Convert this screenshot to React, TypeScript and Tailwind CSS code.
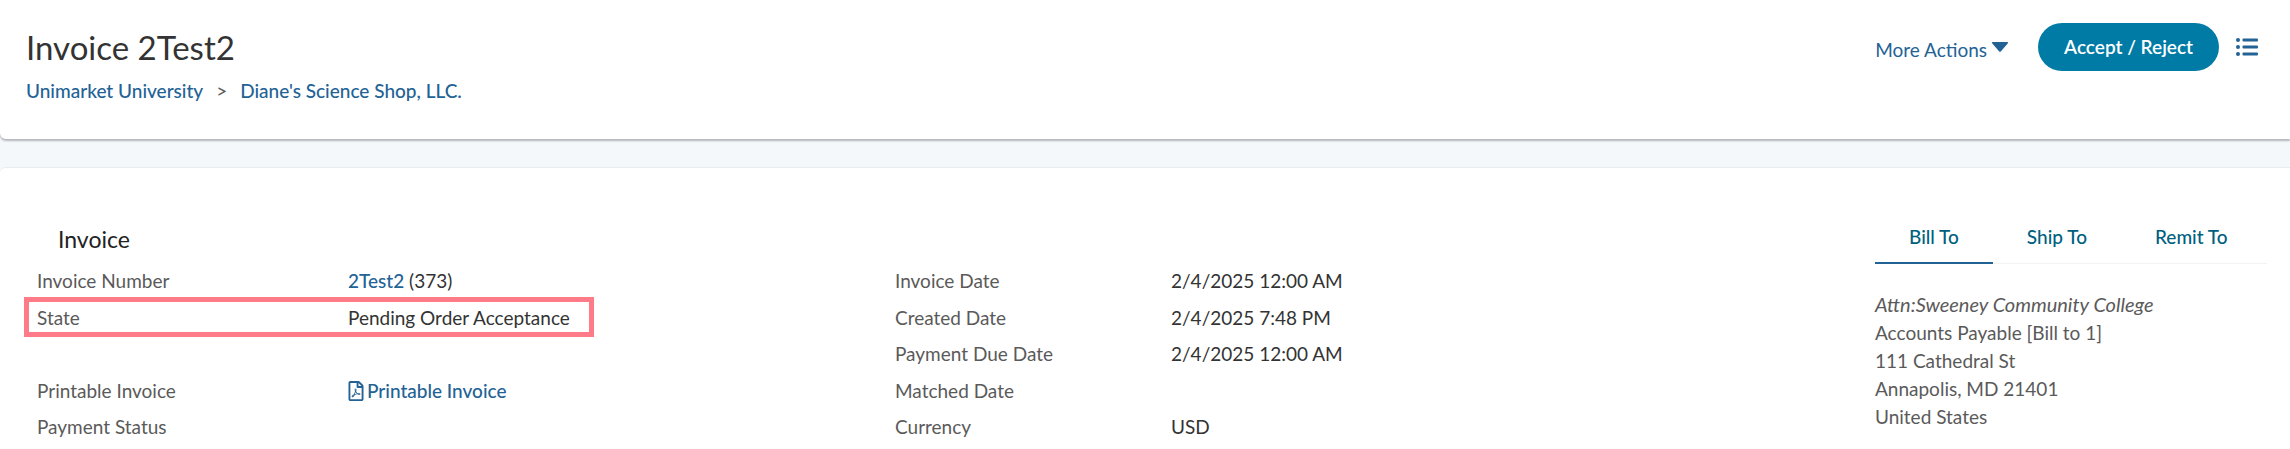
import type { ReactNode } from 'react'
import { useState } from 'react'
import { FaRegFilePdf } from 'react-icons/fa'

type Field = { label: string; value?: ReactNode; highlight?: boolean }

const linkClass = 'font-medium text-[#236295] hover:underline'

const summary: Field[] = [
  { label: 'Invoice Number', value: <><a href="#invoice" className={linkClass}>2Test2</a> (373)</> },
  { label: 'State', value: 'Pending Order Acceptance', highlight: true },
  { label: '' },
  {
    label: 'Printable Invoice',
    value: (
      <a href="#print" className={`${linkClass} flex items-center gap-[3px]`}>
        <FaRegFilePdf className="h-5 w-4" />
        Printable Invoice
      </a>
    ),
  },
  { label: 'Payment Status' },
]

const dates: Field[] = [
  { label: 'Invoice Date', value: '2/4/2025 12:00 AM' },
  { label: 'Created Date', value: '2/4/2025 7:48 PM' },
  { label: 'Payment Due Date', value: '2/4/2025 12:00 AM' },
  { label: 'Matched Date' },
  { label: 'Currency', value: 'USD' },
]

const tabs = ['Bill To', 'Ship To', 'Remit To']

function ListIcon() {
  return (
    <svg viewBox="0 0 22 18" className="h-[18px] w-[22px]" fill="currentColor" aria-hidden="true">
      {[2, 9, 16].map(y => (
        <g key={y}>
          <circle cx="2" cy={y} r="2" />
          <rect x="6.500" y={y - 1.5} width="15.500" height="3" rx="1" />
        </g>
      ))}
    </svg>
  )
}

function Header() {
  return (
    <header className="relative flex h-[139px] items-start justify-between rounded-bl-md bg-white pl-[26px] pr-8 shadow-[0_2px_2px_#b4b8bc]">
      <div className="pt-[23px]">
        <h1 className="text-[33px] leading-12 text-[#333333]">Invoice 2Test2</h1>
        <nav aria-label="Breadcrumb" className="mt-2 flex gap-[13px] leading-6">
          <a href="#university" className={linkClass}>Unimarket University</a>
          <span>&gt;</span>
          <a href="#shop" className={linkClass}>Diane's Science Shop, LLC.</a>
        </nav>
      </div>
      <div className="flex items-center pt-[23px]">
        <button type="button" className="flex items-center gap-[5px] text-[#236295]">
          <span className="pt-1.5">More Actions</span>
          <svg viewBox="0 0 16 10" className="h-[10px] w-4" fill="currentColor" aria-hidden="true">
            <path d="M1 0h14c.9 0 1.3 1 .7 1.600L9 9.300c-.6.7-1.400.7-2 0L.3 1.600C-.3 1 .1 0 1 0z" />
          </svg>
        </button>
        <button type="button" className="ml-[30px] h-12 rounded-full bg-[#007ba5] px-[26px] font-semibold text-white">
          Accept / Reject
        </button>
        <button type="button" aria-label="Show list" className="ml-[17px] text-[#236295]">
          <ListIcon />
        </button>
      </div>
    </header>
  )
}

function FieldList({ fields, columns }: { fields: Field[]; columns: string }) {
  return (
    <dl className="grid h-[183px] grid-rows-5">
      {fields.map((f, i) => (
        <div key={i} className={`relative grid items-center ${columns}`}>
          <dt>{f.label}</dt>
          <dd className="text-[#333333]">{f.value}</dd>
          {f.highlight && (
            <span className="pointer-events-none absolute -left-[13px] -top-[3px] h-10 w-[570px] border-5 border-[#ff7b87]" />
          )}
        </div>
      ))}
    </dl>
  )
}

function Addresses() {
  const [active, setActive] = useState('Bill To')

  return (
    <div>
      <div role="tablist" className="flex border-b border-[#f1f3f4]">
        {tabs.map(tab => (
          <button
            key={tab}
            type="button"
            role="tab"
            aria-selected={tab === active}
            onClick={() => setActive(tab)}
            className={`-mb-px h-[42px] border-b-2 px-[34px] pb-2.5 font-medium text-[#005f80] ${tab === active ? 'border-[#236295]' : 'border-transparent'}`}
          >
            {tab}
          </button>
        ))}
      </div>
      <address className="pt-[26px] leading-7 not-italic">
        <em className="text-xl leading-7">Attn:Sweeney Community College</em><br />
        Accounts Payable [Bill to 1]<br />
        111 Cathedral St<br />
        Annapolis, MD 21401<br />
        United States
      </address>
    </div>
  )
}

export default function App() {
  return (
    <div className="flex min-h-screen flex-col bg-[#f4f8fb] font-['Lato',sans-serif] text-[19px] text-[#5a5a5a]">
      <Header />
      <main className="mt-7 grid flex-1 grid-cols-[858fr_980fr_392fr] rounded-tl-md border-t border-[#eaedef] bg-white pl-[37px] pr-[23px]">
        <section className="pt-[55px]">
          <h2 className="pl-[21px] text-[23px] leading-8 text-[#222222]">Invoice</h2>
          <div className="pt-2">
            <FieldList fields={summary} columns="grid-cols-[311fr_547fr]" />
          </div>
        </section>
        <section className="pt-[95px]">
          <FieldList fields={dates} columns="grid-cols-[276fr_704fr]" />
        </section>
        <section className="pt-[54px]">
          <Addresses />
        </section>
      </main>
    </div>
  )
}
